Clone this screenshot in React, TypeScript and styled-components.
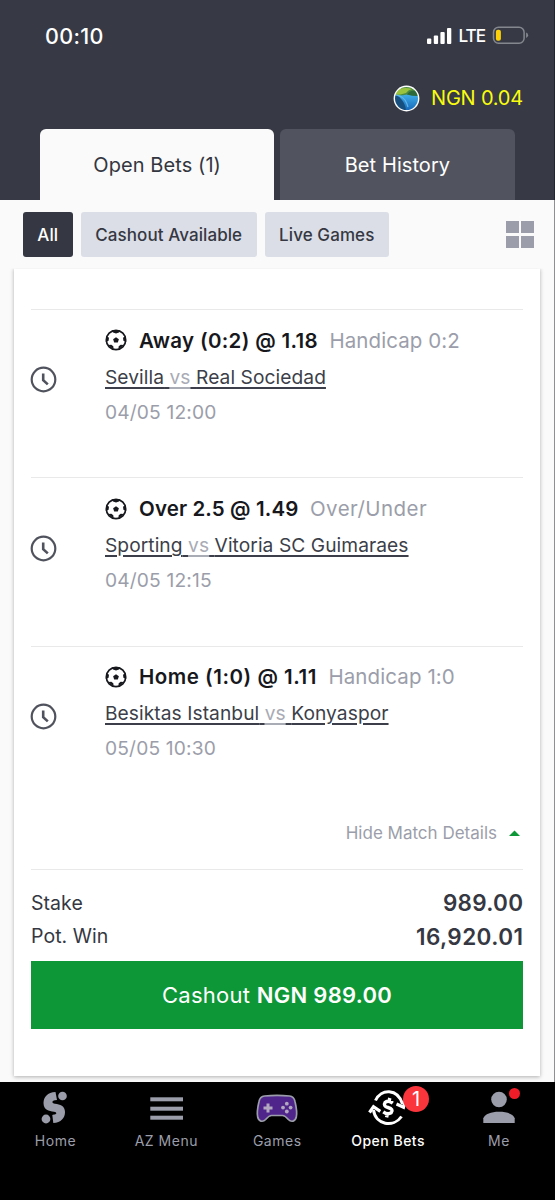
import React from "react";
import styled, { createGlobalStyle } from "styled-components";

const GlobalStyle = createGlobalStyle`
  * { box-sizing: border-box; }
  body { margin: 0; background: #000; font-family: Inter, "Liberation Sans", sans-serif; }
`;

const Screen = styled.div`
  width: 555px;
  height: 1200px;
  display: flex;
  flex-direction: column;
  overflow: hidden;
  background: #fafafa;
`;

const Header = styled.header`
  height: 200.4px;
  flex: none;
  background: #373a45;
  border-right: 1px solid #22242c;
  display: flex;
  flex-direction: column;
`;

const StatusBar = styled.div`
  height: 72px;
  display: flex;
  align-items: center;
  padding: 0 25px 1px 45px;
  color: #fff;
`;

const Time = styled.span`
  font-size: 21.5px;
  font-weight: 500;
  letter-spacing: 0.35px;
  flex: 1;
`;

const Network = styled.span`
  font-size: 17.2px;
  font-weight: 450;
  letter-spacing: -1.1px;
  margin: 0 7px 0 6.5px;
`;

const Balance = styled.div`
  height: 57px;
  display: flex;
  align-items: center;
  justify-content: flex-end;
  gap: 11px;
  padding: 0 31px 5px 0;
  color: #f9fc0f;
  font-size: 20px;
  letter-spacing: -0.2px;
`;

const Tabs = styled.div`
  display: flex;
  gap: 6px;
  padding-left: 40px;
  flex: 1;
`;

const Tab = styled.div<{ $active?: boolean }>`
  width: 234.3px;
  display: flex;
  align-items: center;
  justify-content: center;
  border-radius: 6px 6px 0 0;
  font-size: 20px;
  letter-spacing: 0.08px;
  padding-top: 1px;
  background: ${(p) => (p.$active ? "#fafafa" : "#51545e")};
  color: ${(p) => (p.$active ? "#33363f" : "#fff")};
`;

const Filters = styled.div`
  height: 68px;
  flex: none;
  display: flex;
  align-items: center;
  gap: 8.5px;
  padding: 0 20.5px 0 23px;
  border-right: 1px solid #8f8f92;
`;

const Chip = styled.button<{ $active?: boolean; $width: number }>`
  width: ${(p) => p.$width}px;
  height: 45px;
  padding: 1px 0 0;
  border: 0;
  border-radius: 3px;
  font: 450 17px Inter, "Liberation Sans", sans-serif;
  letter-spacing: 0.08px;
  white-space: nowrap;
  background: ${(p) => (p.$active ? "#353842" : "#dcdee7")};
  color: ${(p) => (p.$active ? "#fff" : "#353842")};
`;

const GridToggle = styled.div`
  margin-left: auto;
  display: grid;
  grid-template-columns: 12.5px 12.5px;
  grid-auto-rows: 12.5px;
  gap: 2.5px;
`;

const GridCell = styled.span`
  background: #9b9eaa;
`;

const Content = styled.main`
  height: 813.6px;
  flex: none;
  padding: 0 14px 6px 14px;
  border-right: 1px solid #8f8f92;
  overflow: hidden;
`;

const Card = styled.section`
  height: 808px;
  background: #fff;
  box-shadow: 0 1px 4px rgba(0, 0, 0, 0.3);
  clip-path: inset(0 -8px -6px -8px);
  padding: 40.6px 17px 0 17px;
  display: flex;
  flex-direction: column;
`;

const Match = styled.article`
  height: 168.3px;
  flex: none;
  border-top: 1.5px solid #e9e9ea;
  display: flex;
  padding-top: 12px;
`;

const ClockSlot = styled.div`
  width: 74px;
  padding-top: 44.5px;
  flex: none;

  svg { display: block; margin-left: -1.5px; }
`;

const Pick = styled.div`
  height: 36.7px;
  display: flex;
  align-items: center;
  color: #17181d;
  font-size: 20.5px;
  white-space: nowrap;

  svg { margin-right: 12.5px; margin-left: -0.5px; }
`;

const Selection = styled.strong<{ $spacing: number }>`
  font-weight: 600;
  letter-spacing: ${(p) => p.$spacing}px;
`;

const Market = styled.span<{ $spacing: number }>`
  color: #9b9eaa;
  margin-left: 11.5px;
  letter-spacing: ${(p) => p.$spacing}px;
`;

const Teams = styled.div`
  font-size: 19.2px;
  line-height: 36px;
  color: #3c3f49;
  letter-spacing: 0.06px;
  text-decoration: underline;
  text-decoration-thickness: 1.6px;
  text-underline-offset: 3px;
  white-space: nowrap;
`;

const Versus = styled.span`
  color: #a9abb5;
  text-decoration: underline;
  text-decoration-thickness: 1.6px;
  text-underline-offset: 3px;
`;

const Kickoff = styled.div`
  font-size: 19.2px;
  line-height: 35.6px;
  color: #9b9eaa;
  letter-spacing: 0.15px;
`;

const HideDetails = styled.div`
  height: 55.5px;
  flex: none;
  display: flex;
  align-items: center;
  justify-content: flex-end;
  gap: 12px;
  padding: 0 3px 18px 0;
  color: #9b9eaa;
  font-size: 17px;
  letter-spacing: 0;
`;

const Summary = styled.div`
  border-top: 1.5px solid #e9e9ea;
  padding-top: 15.5px;
  height: 92px;
  flex: none;
`;

const SummaryRow = styled.div`
  display: flex;
  justify-content: space-between;
  height: 33.5px;
  align-items: center;
  font-size: 19.5px;
  color: #353842;
  letter-spacing: 0.05px;
`;

const Amount = styled.strong<{ $spacing: number }>`
  font-size: 22.5px;
  font-weight: 600;
  letter-spacing: ${(p) => p.$spacing}px;
  margin-right: ${(p) => -p.$spacing}px;
`;

const Cashout = styled.button`
  height: 68px;
  flex: none;
  border: 0;
  background: #0d9737;
  color: #fff;
  font: 400 22px Inter, "Liberation Sans", sans-serif;
  letter-spacing: 0.28px;

  b { font-weight: 600; }
`;

const Nav = styled.nav`
  flex: 1;
  background: #000;
  display: grid;
  grid-template-columns: repeat(5, 110.9px);
`;

const NavItem = styled.div<{ $active?: boolean }>`
  display: flex;
  flex-direction: column;
  align-items: center;
  padding-top: 4.5px;
  color: ${(p) => (p.$active ? "#fff" : "#9b9eaa")};
  font-size: 14px;
  font-weight: ${(p) => (p.$active ? 450 : 400)};
  letter-spacing: 0.5px;
  line-height: 20px;
`;

const NavIcon = styled.div`
  position: relative;
  height: 44.5px;
  width: 44px;

  svg { display: block; }
`;

const Badge = styled.span`
  position: absolute;
  left: 37px;
  top: -0.5px;
  width: 26px;
  height: 26px;
  border-radius: 50%;
  background: #fb353c;
  color: #fff;
  font-size: 20px;
  font-weight: 400;
  letter-spacing: 0;
  line-height: 26px;
  text-align: center;
`;

const Dot = styled.span`
  position: absolute;
  left: 32px;
  top: 1.5px;
  width: 11px;
  height: 11px;
  border-radius: 50%;
  background: #f01c28;
`;

const SignalIcon = () => (
  <svg width="25" height="18" viewBox="0 0 25 18" fill="#fff">
    <rect x="0" y="11.5" width="4.3" height="5.5" rx="1" />
    <rect x="6.8" y="8.5" width="4.3" height="8.5" rx="1" />
    <rect x="13.4" y="5" width="4.3" height="12" rx="1" />
    <rect x="20" y="1" width="4.3" height="16" rx="1" />
  </svg>
);

const BatteryIcon = () => (
  <svg width="37" height="19" viewBox="0 0 37 19">
    <rect x="1.5" y="1.2" width="30.6" height="16" rx="5" fill="none" stroke="#85878e" strokeWidth="1.5" />
    <path d="M34.1 6.5q2 .8 2 2.7t-2 2.7z" fill="#85878e" />
    <rect x="3.9" y="3.7" width="5" height="11" rx="2" fill="#fbd00b" />
  </svg>
);

const Avatar = () => (
  <svg width="27" height="27" viewBox="0 0 27 27">
    <defs>
      <clipPath id="avatar"><circle cx="13.5" cy="13.5" r="12" /></clipPath>
      <linearGradient id="sea" x1="0" y1="0" x2="0" y2="1">
        <stop offset="0.35" stopColor="#3faee8" />
        <stop offset="1" stopColor="#1261b5" />
      </linearGradient>
    </defs>
    <g clipPath="url(#avatar)">
      <rect width="27" height="27" fill="url(#sea)" />
      <path d="M0 0h27v10Q22 10.5 14 9.5Q8 11 0 10z" fill="#4c8a42" />
      <path d="M1 8Q8 1 19 4Q15 5 13 8Q8 10 1 10z" fill="#9ac33f" />
      <path d="M14 9.5Q17 3.5 27 7v4Q20 11.5 14 9.5z" fill="#2c6a3c" />
      <path d="M0 9q6 2 9 6q4 5 4 12H0z" fill="#17507f" />
      <path d="M2 10q6 0 10 5q2 3 3 7" fill="none" stroke="#62b6e8" strokeWidth="1.2" />
    </g>
    <circle cx="13.5" cy="13.5" r="12.2" fill="none" stroke="#fff" strokeWidth="1.4" />
  </svg>
);

const ClockIcon = () => (
  <svg width="27" height="27" viewBox="0 0 27 27" fill="none" stroke="#50535d">
    <circle cx="13.5" cy="13.5" r="11.8" strokeWidth="2.2" />
    <path d="M13.2 7.5v6.6l4.6 4.3" strokeWidth="2.6" />
  </svg>
);

const BallIcon = () => (
  <svg width="22" height="22" viewBox="0 0 22 22" fill="#17181d">
    <circle cx="11" cy="11" r="9.7" fill="none" stroke="#17181d" strokeWidth="1.7" />
    <path d="M11 8.2l2.9 2-1.1 3.3H9.2L8.1 10.2z" />
    <path d="M7 1.3h8l-1 2.3-3 1-3-1z" />
    <path d="M20.5 7l.8 6-2.9-1.3-.4-2.9z" />
    <path d="M1.5 7l-.8 6 2.9-1.3.4-2.9z" />
    <path d="M18.8 16l-5.5 5 .4-3.7 2-1.6z" />
    <path d="M3.2 16l5.5 5-.4-3.7-2-1.6z" />
  </svg>
);

const HomeIcon = () => (
  <svg width="44" height="44" viewBox="1 0 44 44" fill="#9b9eaa">
    <path d="M23.5 6C15.5 6.5 11.5 11 11.5 17C11.5 24 17 25.2 22 25.7C25 26 25.2 28.2 22 28.6L20.3 29L21.3 37C29 36.5 33 32 33 26C33 19.8 28 18.3 23 17.7C19.5 17.3 19.5 14.7 23 14.3L25 14z" />
    <circle cx="30.5" cy="10" r="4.3" />
    <circle cx="14" cy="33" r="4.4" />
  </svg>
);

const MenuIcon = () => (
  <svg width="44" height="44" viewBox="0 0 44 44" fill="#9b9eaa">
    <rect x="6.3" y="11.3" width="32.7" height="4" />
    <rect x="6.3" y="20.7" width="32.7" height="4" />
    <rect x="6.3" y="29.7" width="32.7" height="4" />
  </svg>
);

const GamepadIcon = () => (
  <svg width="44" height="44" viewBox="0 0 44 44">
    <path d="M9.5 10Q22 8.8 34.5 10Q39 10.5 40 15.5C41.5 22 42.2 27.5 41.3 31C40.3 35.5 36.3 36.5 33.3 33.5C30.8 30.6 30 29.5 27.5 29.5H16.5C14 29.5 13.2 30.6 10.7 33.5C7.7 36.5 3.7 35.5 2.7 31C1.8 27.5 2.5 22 4 15.5Q5 10.5 9.5 10z" fill="#50258b" stroke="#9b9eaa" strokeWidth="1.7" />
    <path d="M11.5 17.5h3v3h3v3h-3v3h-3v-3h-3v-3h3z" fill="#b2a9c0" />
    <g fill="#b2a9c0">
      <circle cx="31.8" cy="17.7" r="1.9" />
      <circle cx="28" cy="21.6" r="1.9" />
      <circle cx="35.6" cy="21.6" r="1.9" />
      <circle cx="31.8" cy="25.5" r="1.9" />
    </g>
  </svg>
);

const CashIcon = () => (
  <svg width="44" height="44" viewBox="0 0 44 44" fill="none" stroke="#fff">
    <path d="M9.5 14.5C15 2.5 31.5 2 36.5 18" strokeWidth="3" />
    <path d="M7.5 24C9.5 39 27.5 42 35.5 30.5" strokeWidth="3" />
    <path d="M30.5 18l7 3.2 1.5-6M3.5 26.5l4-5.8 6.8 4.6" strokeWidth="3.2" />
    <path d="M26.8 17.2Q22.5 13.8 19.2 16.3Q16.8 20 22 21.5Q28 23.3 25.2 26.8Q21.5 29 17.3 25.8M23.8 12l-.8 3.5M21.4 27.5l-.8 3.8" strokeWidth="3.4" />
  </svg>
);

const PersonIcon = () => (
  <svg width="44" height="44" viewBox="0 0 44 44" fill="#9b9eaa">
    <circle cx="22" cy="13.5" r="7.8" />
    <path d="M6.3 37v-4.8C8 28 14 25.8 22 25.8s14 2.2 15.7 6.4V37z" />
  </svg>
);

const matches = [
  { pick: "Away (0:2) @ 1.18", market: "Handicap 0:2", home: "Sevilla", away: "Real Sociedad", time: "04/05 12:00", ps: 0.32, ms: 0.08 },
  { pick: "Over 2.5 @ 1.49", market: "Over/Under", home: "Sporting", away: "Vitoria SC Guimaraes", time: "04/05 12:15", ps: 0.12, ms: 0.45 },
  { pick: "Home (1:0) @ 1.11", market: "Handicap 1:0", home: "Besiktas Istanbul", away: "Konyaspor", time: "05/05 10:30", ps: 0.52, ms: 0.1 },
];

export default function App() {
  return (
    <Screen>
      <GlobalStyle />
      <Header>
        <StatusBar>
          <Time>00:10</Time>
          <SignalIcon />
          <Network>LTE</Network>
          <BatteryIcon />
        </StatusBar>
        <Balance><Avatar /><span>NGN 0.04</span></Balance>
        <Tabs>
          <Tab $active>Open Bets (1)</Tab>
          <Tab>Bet History</Tab>
        </Tabs>
      </Header>
      <Filters>
        <Chip $active $width={49.5}>All</Chip>
        <Chip $width={175.5}>Cashout Available</Chip>
        <Chip $width={123.5}>Live Games</Chip>
        <GridToggle><GridCell /><GridCell /><GridCell /><GridCell /></GridToggle>
      </Filters>
      <Content>
        <Card>
          {matches.map((m) => (
            <Match key={m.home}>
              <ClockSlot><ClockIcon /></ClockSlot>
              <div>
                <Pick>
                  <BallIcon />
                  <Selection $spacing={m.ps}>{m.pick}</Selection>
                  <Market $spacing={m.ms}>{m.market}</Market>
                </Pick>
                <Teams>{m.home} <Versus>vs</Versus> {m.away}</Teams>
                <Kickoff>{m.time}</Kickoff>
              </div>
            </Match>
          ))}
          <HideDetails>
            <span>Hide Match Details</span>
            <svg width="11" height="6" viewBox="0 0 11 6"><path d="M0 6L5.5 0.5 11 6z" fill="#0d9737" /></svg>
          </HideDetails>
          <Summary>
            <SummaryRow><span>Stake</span><Amount $spacing={0.25}>989.00</Amount></SummaryRow>
            <SummaryRow><span>Pot. Win</span><Amount $spacing={0.42}>16,920.01</Amount></SummaryRow>
          </Summary>
          <Cashout>Cashout <b>NGN 989.00</b></Cashout>
        </Card>
      </Content>
      <Nav>
        <NavItem><NavIcon><HomeIcon /></NavIcon>Home</NavItem>
        <NavItem><NavIcon><MenuIcon /></NavIcon>AZ Menu</NavItem>
        <NavItem><NavIcon><GamepadIcon /></NavIcon>Games</NavItem>
        <NavItem $active><NavIcon><CashIcon /><Badge>1</Badge></NavIcon>Open Bets</NavItem>
        <NavItem><NavIcon><PersonIcon /><Dot /></NavIcon>Me</NavItem>
      </Nav>
    </Screen>
  );
}
